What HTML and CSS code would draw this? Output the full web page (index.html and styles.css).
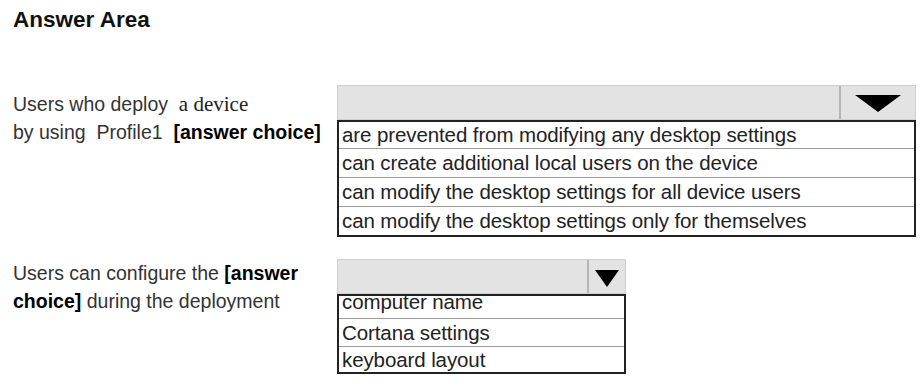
FILE: index.html
```html
<html>

<head>
    <meta charset="utf-8">
    <title>Answer Area</title>
    <link rel="stylesheet" href="styles.css">
</head>

<body>
    <div class="answer-area">
        <h1 class="title">Answer Area</h1>

        <div class="question q1">
            <div class="prompt">
                <div class="line">Users who deploy&nbsp; <span class="serif">a device</span></div>
                <div class="line">by using&nbsp; Profile1 &nbsp;<b>[answer choice]</b></div>
            </div>
            <div class="dropdown wide">
                <div class="select">
                    <div class="value"></div>
                    <div class="arrow"><span class="tri"></span></div>
                </div>
                <div class="options">
                    <div class="option">are prevented from modifying any desktop settings</div>
                    <div class="option">can create additional local users on the device</div>
                    <div class="option">can modify the desktop settings for all device users</div>
                    <div class="option">can modify the desktop settings only for themselves</div>
                </div>
            </div>
        </div>

        <div class="question q2">
            <div class="prompt">
                <div class="line">Users can configure the <b>[answer</b></div>
                <div class="line"><b>choice]</b> during the deployment</div>
            </div>
            <div class="dropdown narrow">
                <div class="select">
                    <div class="value"></div>
                    <div class="arrow"><span class="tri"></span></div>
                </div>
                <div class="options">
                    <div class="option clipped">computer name</div>
                    <div class="option">Cortana settings</div>
                    <div class="option last">keyboard layout</div>
                </div>
            </div>
        </div>
    </div>
</body>

</html>
```

FILE: styles.css
```css
* {
    margin: 0;
    padding: 0;
    box-sizing: border-box;
}

body {
    background: white;
    font-family: "Liberation Sans", Arial, sans-serif;
    color: #333;
}

.answer-area {
    padding: 7px 0 0 13px;
}

.title {
    font-size: 22.5px;
    font-weight: bold;
    color: #111;
    line-height: 26px;
}

.question {
    display: flex;
    align-items: flex-start;
}

.q1 {
    margin-top: 52px;
}

.q2 {
    margin-top: 22px;
}

.prompt {
    width: 324px;
    font-size: 19.5px;
}

.q1 .prompt {
    padding-top: 5px;
}

.q2 .prompt {
    padding-top: 0;
}

.line {
    height: 28px;
    line-height: 28px;
    white-space: nowrap;
}

.prompt b {
    color: #000;
}

.serif {
    font-family: "Liberation Serif", "Times New Roman", serif;
    font-size: 21px;
    color: #222;
}

.select {
    display: flex;
    background: #e3e3e3;
    border: 1px solid #d0d0d0;
    height: 35px;
}

.value {
    flex: 1;
}

.arrow {
    border-left: 2px solid #b5b5b5;
    display: flex;
    align-items: center;
    justify-content: center;
}

.tri {
    width: 0;
    height: 0;
    border-style: solid;
    border-color: #000 transparent transparent transparent;
}

.wide {
    width: 579px;
}

.wide .arrow {
    width: 76px;
}

.wide .tri {
    border-width: 17px 23px 0 23px;
    margin-top: 2px;
}

.narrow {
    width: 289px;
}

.narrow .arrow {
    width: 38px;
}

.narrow .tri {
    border-width: 17px 12px 0 12px;
    margin-top: 4px;
}

.options {
    border: 2px solid #222;
    font-size: 20.5px;
    color: #222;
    letter-spacing: -0.1px;
}

.option {
    height: 29px;
    line-height: 28px;
    padding-left: 3px;
    border-top: 1px solid #9a9a9a;
    white-space: nowrap;
    overflow: hidden;
}

.option:first-child {
    border-top: none;
    height: 26px;
    line-height: 26px;
}

.narrow .option {
    height: 28px;
    line-height: 27px;
}

.narrow .option.clipped {
    height: 22px;
    line-height: 12px;
}

.narrow .option.last {
    height: 26px;
    line-height: 25px;
}
```
